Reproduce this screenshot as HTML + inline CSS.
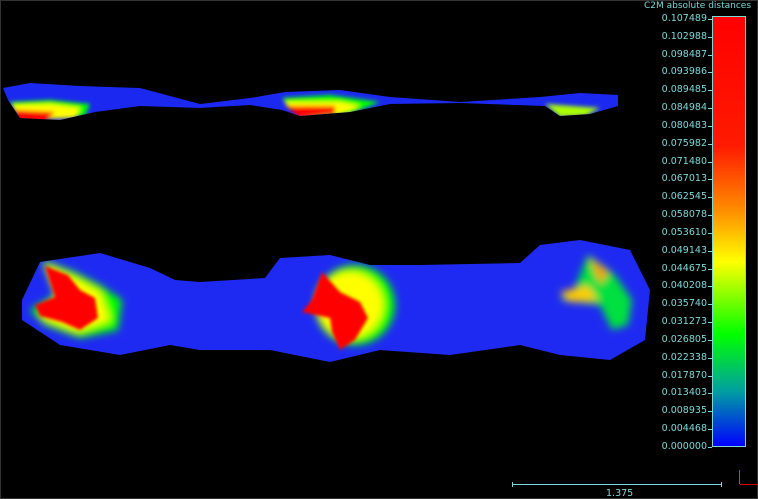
<!DOCTYPE html>
<html><head><meta charset="utf-8"><style>
html,body{margin:0;padding:0;background:#000;width:758px;height:499px;overflow:hidden;font-family:"DejaVu Sans","Liberation Sans",sans-serif}
.lbl{position:absolute;right:51px;font-size:9.5px;color:#7fd8d8;line-height:10px}
.tk{position:absolute;left:708px;width:4px;height:1px;background:#7fd8d8}
</style></head><body>
<svg width="758" height="499" style="position:absolute;left:0;top:0">
<defs>
<filter id="b" x="-50%" y="-50%" width="200%" height="200%"><feGaussianBlur stdDeviation="4"/></filter>
<filter id="b1" x="-50%" y="-50%" width="200%" height="200%"><feGaussianBlur stdDeviation="1.5"/></filter>
<filter id="b2" x="-50%" y="-50%" width="200%" height="200%"><feGaussianBlur stdDeviation="2"/></filter>
<linearGradient id="cb" x1="0" y1="0" x2="0" y2="1">
<stop offset="0" stop-color="#ff0000"/><stop offset="0.3" stop-color="#ff1a00"/>
<stop offset="0.45" stop-color="#ff8c00"/><stop offset="0.57" stop-color="#ffff00"/>
<stop offset="0.74" stop-color="#00ff00"/><stop offset="0.87" stop-color="#00a0a0"/>
<stop offset="1" stop-color="#0000ff"/></linearGradient>
<clipPath id="bl"><path d="M22,300 L40,262 L100,253 L150,268 L175,280 L200,282 L265,278 L280,258 L330,255 L370,265 L420,265 L520,263 L540,245 L580,240 L630,250 L650,290 L645,340 L610,360 L560,355 L520,345 L450,355 L380,350 L330,362 L270,350 L200,350 L170,345 L120,355 L60,345 L22,320Z"/></clipPath>
<clipPath id="ts"><path d="M3,88 L30,83 L80,86 L140,88 L200,104 L250,98 L285,92 L340,90 L390,97 L460,102 L540,97 L580,93 L618,95 L618,106 L590,114 L560,116 L545,106 L460,103 L390,104 L350,112 L300,116 L282,110 L250,105 L200,108 L140,106 L95,112 L60,120 L20,118 L8,100Z"/></clipPath>
</defs>
<rect x="0" y="0" width="758" height="499" fill="#000"/>
<rect x="0.5" y="0.5" width="757" height="498" fill="none" stroke="#333"/>
<g clip-path="url(#ts)">
<rect x="0" y="80" width="620" height="45" fill="#1a28f0"/>
<g filter="url(#b2)">
<path d="M10,102 L50,100 L90,104 L85,116 L20,120 Z" fill="#00ff00"/>
<path d="M12,105 L50,104 L80,108 L75,118 L20,120 Z" fill="#ffff00"/>
<path d="M15,110 L55,112 L45,122 L18,122 Z" fill="#ff0000"/>
<path d="M282,98 L330,95 L380,102 L350,114 L300,118 Z" fill="#00ff00"/>
<path d="M284,102 L340,102 L360,106 L340,114 L300,118 Z" fill="#ffff00"/>
<path d="M286,106 L335,106 L335,114 L300,118 Z" fill="#ff0000"/>
<path d="M545,104 L600,108 L585,116 L560,117 Z" fill="#aaff00"/>
</g>
</g>
<g clip-path="url(#bl)">
<rect x="0" y="230" width="660" height="140" fill="#1e2af2"/>
<g filter="url(#b)">
<path d="M42,260 L75,272 L100,285 L122,300 L118,330 L80,338 L45,325 L30,310 L55,295 Z" fill="#00ff00"/>
<path d="M45,264 L75,278 L100,292 L110,320 L78,332 L40,318 L58,296 Z" fill="#ffff00"/>
</g>
<g filter="url(#b1)">
<path d="M45,266 L68,275 L80,290 L95,298 L98,318 L80,330 L62,322 L40,316 L35,305 L55,297 Z" fill="#ff0000"/>
</g>
<g filter="url(#b)">
<circle cx="355" cy="305" r="40" fill="#00ff00"/>
<circle cx="350" cy="305" r="33" fill="#ffff00"/>
</g>
<g filter="url(#b1)">
<path d="M322,272 L340,292 L360,302 L368,318 L355,340 L340,350 L332,332 L330,318 L302,312 L312,300 Z" fill="#ff0000"/>
</g>
<g filter="url(#b)">
<path d="M588,255 L615,275 L632,300 L628,325 L612,330 L600,305 L560,300 L575,288 Z" fill="#00e040"/>
<path d="M560,292 L588,286 L598,300 L570,302 Z" fill="#ffcc00"/>
<path d="M590,258 L608,272 L600,284 Z" fill="#ff9900"/>
</g>
</g>
<rect x="712.5" y="16.5" width="33" height="430" fill="url(#cb)" stroke="#7fd8d8"/>
<line x1="512" y1="484.5" x2="722" y2="484.5" stroke="#7fd8d8"/>
<line x1="512.5" y1="482" x2="512.5" y2="487" stroke="#7fd8d8"/>
<line x1="721.5" y1="482" x2="721.5" y2="487" stroke="#7fd8d8"/>
<line x1="739.5" y1="470" x2="739.5" y2="484" stroke="#00b000"/>
<line x1="740" y1="484.5" x2="758" y2="484.5" stroke="#d00000"/>
</svg>
<div style="position:absolute;left:644px;top:1px;font-size:9px;color:#7fd8d8">C2M absolute distances</div>
<div style="position:absolute;left:606px;top:488px;font-size:9.5px;color:#7fd8d8">1.375</div>
<div id="lbls"></div>
<script>
var v=["0.107489","0.102988","0.098487","0.093986","0.089485","0.084984","0.080483","0.075982","0.071480","0.067013","0.062545","0.058078","0.053610","0.049143","0.044675","0.040208","0.035740","0.031273","0.026805","0.022338","0.017870","0.013403","0.008935","0.004468","0.000000"];
var h="";for(var i=0;i<25;i++){var y=19+i*17.83;h+='<div class="lbl" style="top:'+(y-5)+'px">'+v[i]+'</div><div class="tk" style="top:'+Math.round(y)+'px"></div>';}
document.getElementById("lbls").innerHTML=h;
</script>
</body></html>
